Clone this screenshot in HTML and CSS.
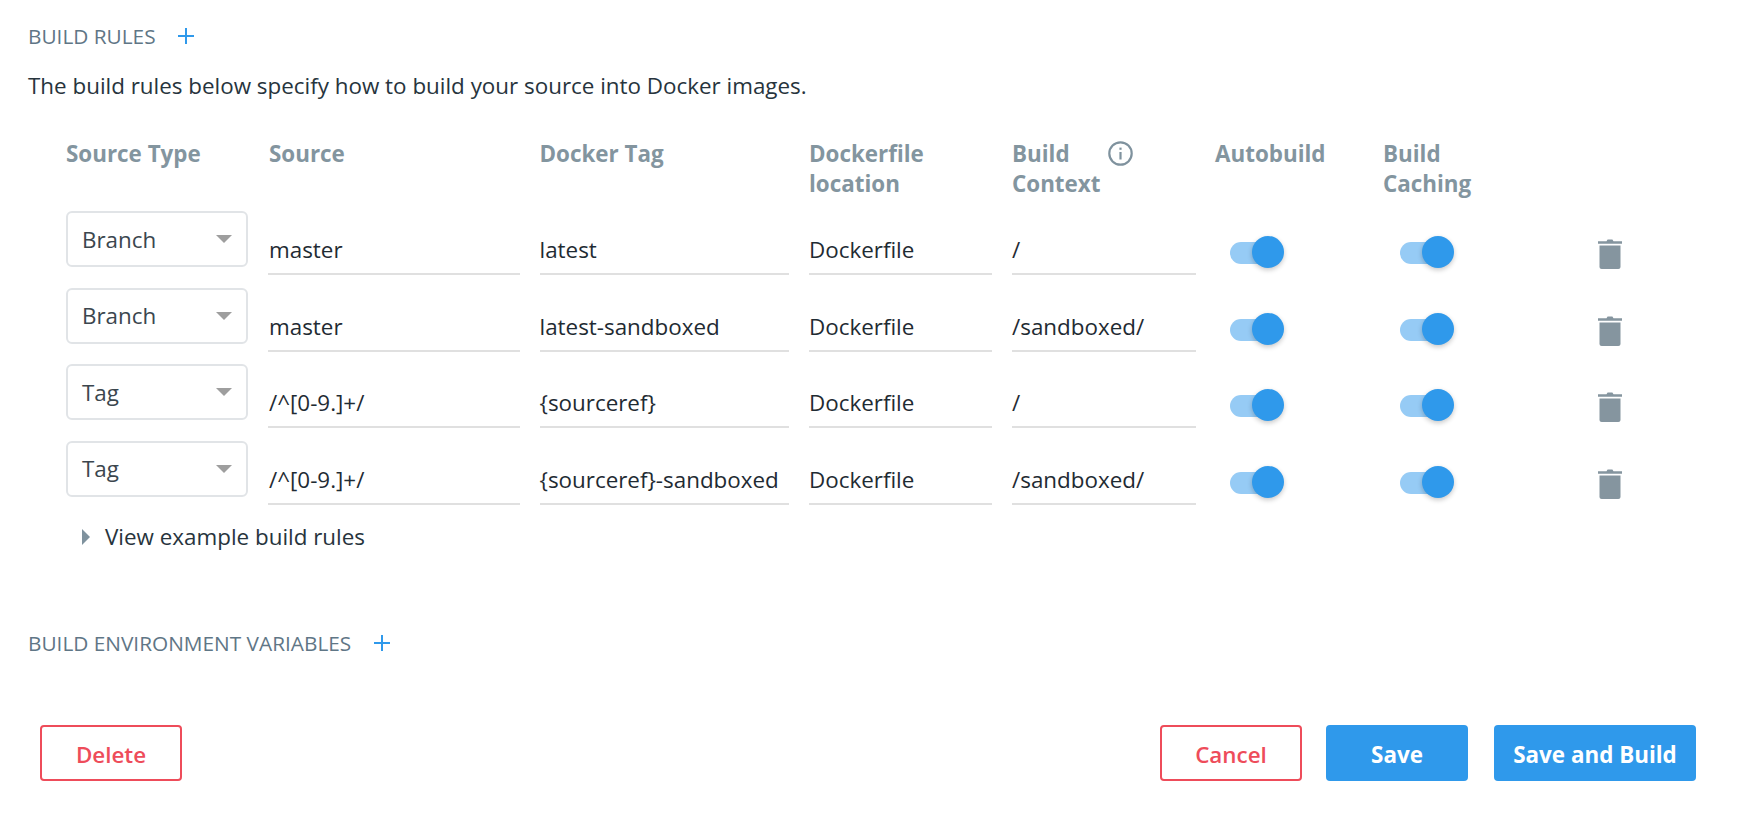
FILE: index.html
```html
<!DOCTYPE html>
<html lang="en">
<head>
<meta charset="utf-8">
<title>Build rules</title>
<link rel="stylesheet" href="styles.css">
</head>
<body>
<main class="page">
  <h2 class="section-title first"><span>BUILD RULES</span><svg class="plus" viewBox="0 0 16 16"><path d="M8 0v16M0 8h16"/></svg></h2>
  <p class="intro">The build rules below specify how to build your source into Docker images.</p>
  <section class="rules">
    <div class="head">Source Type</div>
    <div class="head">Source</div>
    <div class="head">Docker Tag</div>
    <div class="head">Dockerfile<br>location</div>
    <div class="head context">Build<br>Context<svg class="info" viewBox="0 0 25 25"><circle cx="12.5" cy="12.5" r="11.2"/><path d="M12.5 11v7.5"/><path class="dot" d="M12.5 6.6v2.2"/></svg></div>
    <div class="head">Autobuild</div>
    <div class="head">Build<br>Caching</div>
    <div class="head"></div>

    <div class="select"><span>Branch</span><i class="caret"></i></div>
    <div class="field source">master</div>
    <div class="field">latest</div>
    <div class="field">Dockerfile</div>
    <div class="field ctx">/</div>
    <div class="toggle"><i class="track"></i><i class="knob"></i></div>
    <div class="toggle alt"><i class="track"></i><i class="knob"></i></div>
    <div class="trash"><svg viewBox="0 0 24 30"><path d="M8.5 2.2 9.6.4h4.8l1.1 1.8H24v2.6H0V2.200z"/><path d="M1.500 6.600h21v21a2.200 2.200 0 0 1-2.200 2.400H3.700a2.200 2.200 0 0 1-2.200-2.400z"/></svg></div>

    <div class="select"><span>Branch</span><i class="caret"></i></div>
    <div class="field source">master</div>
    <div class="field">latest-sandboxed</div>
    <div class="field">Dockerfile</div>
    <div class="field ctx">/sandboxed/</div>
    <div class="toggle"><i class="track"></i><i class="knob"></i></div>
    <div class="toggle alt"><i class="track"></i><i class="knob"></i></div>
    <div class="trash"><svg viewBox="0 0 24 30"><path d="M8.5 2.2 9.6.4h4.8l1.1 1.8H24v2.6H0V2.200z"/><path d="M1.500 6.600h21v21a2.200 2.200 0 0 1-2.200 2.400H3.700a2.200 2.200 0 0 1-2.200-2.400z"/></svg></div>

    <div class="select"><span>Tag</span><i class="caret"></i></div>
    <div class="field source">/^[0-9.]+/</div>
    <div class="field">{sourceref}</div>
    <div class="field">Dockerfile</div>
    <div class="field ctx">/</div>
    <div class="toggle"><i class="track"></i><i class="knob"></i></div>
    <div class="toggle alt"><i class="track"></i><i class="knob"></i></div>
    <div class="trash"><svg viewBox="0 0 24 30"><path d="M8.5 2.2 9.6.4h4.8l1.1 1.8H24v2.6H0V2.200z"/><path d="M1.500 6.600h21v21a2.200 2.200 0 0 1-2.200 2.400H3.700a2.200 2.200 0 0 1-2.200-2.400z"/></svg></div>

    <div class="select"><span>Tag</span><i class="caret"></i></div>
    <div class="field source">/^[0-9.]+/</div>
    <div class="field">{sourceref}-sandboxed</div>
    <div class="field">Dockerfile</div>
    <div class="field ctx">/sandboxed/</div>
    <div class="toggle"><i class="track"></i><i class="knob"></i></div>
    <div class="toggle alt"><i class="track"></i><i class="knob"></i></div>
    <div class="trash"><svg viewBox="0 0 24 30"><path d="M8.5 2.2 9.6.4h4.8l1.1 1.8H24v2.6H0V2.200z"/><path d="M1.500 6.600h21v21a2.200 2.200 0 0 1-2.200 2.400H3.700a2.200 2.200 0 0 1-2.200-2.400z"/></svg></div>
  </section>
  <div class="example"><i class="arrow"></i><span>View example build rules</span></div>
  <h2 class="section-title env"><span>BUILD ENVIRONMENT VARIABLES</span><svg class="plus" viewBox="0 0 16 16"><path d="M8 0v16M0 8h16"/></svg></h2>
  <footer class="actions">
    <button class="btn danger">Delete</button>
    <div class="actions-right">
      <button class="btn danger cancel">Cancel</button>
      <button class="btn primary">Save</button>
      <button class="btn primary wide">Save and Build</button>
    </div>
  </footer>
</main>
</body>
</html>
```
FILE: styles.css
```css
* { box-sizing: border-box; }
html, body { margin: 0; background: #fff; }
body { font-family: "Open Sans", sans-serif; color: #27343d; }
.page { width: 1738px; height: 836px; padding: 21px 42px 0 28px; overflow: hidden; }

.section-title { display: flex; align-items: center; margin: 0; height: 30px; font-size: 20.8px; font-weight: 400; color: #5f7686; line-height: 30px; }
.section-title .plus { width: 16px; height: 16px; margin-left: 22px; }
.plus path { stroke: #2f99eb; stroke-width: 2; fill: none; }

.intro { margin: 19.5px 0 0; font-size: 22.4px; line-height: 30px; color: #27343d; }

.rules { display: grid; grid-template-columns: 182px 251.5px 249.5px 183px 183px 148px 149px 100px; grid-template-rows: 72.7px repeat(4, 76.6px); column-gap: 20px; margin: 38px 0 0 38px; }
.head { font-size: 22.4px; font-weight: 700; line-height: 30px; color: #83959f; white-space: nowrap; position: relative; }
.head:nth-child(2) { padding-left: 1px; }
.info { position: absolute; left: 96px; top: 2px; width: 25px; height: 25px; fill: none; stroke: #7f929e; stroke-width: 2.2; }

.select { display: flex; align-items: center; justify-content: space-between; height: 56px; padding: 0 14px 0 14px; border: 2px solid #e1e4e7; border-radius: 6px; font-size: 22.4px; color: #3b464e; }
.caret { width: 0; height: 0; border-left: 8px solid transparent; border-right: 8px solid transparent; border-top: 8px solid #9e9e9e; }

.field { height: 64px; padding: 24px 0 0 0; border-bottom: 2px solid #e0e0e0; font-size: 22.4px; line-height: 30px; color: #1f2b33; white-space: nowrap; }
.field.source { padding-left: 1px; }
.field.ctx { margin-right: -1px; }

.toggle { position: relative; height: 64px; }
.track { position: absolute; left: 15px; top: 31px; width: 48px; height: 22px; border-radius: 11px; background: #96cbf5; }
.knob { position: absolute; left: 37px; top: 25px; width: 32px; height: 32px; border-radius: 50%; background: #2f99eb; box-shadow: 0 2px 5px rgba(0,0,0,.22); }
.toggle.alt .track { left: 17px; }
.toggle.alt .knob { left: 39px; }

.trash { padding: 28px 0 0 46px; }
.trash svg { display: block; width: 24px; height: 30px; fill: #85959f; }

.example { display: flex; align-items: center; margin: 4.8px 0 0 54px; height: 30px; font-size: 22.4px; line-height: 30px; color: #27343d; }
.arrow { width: 0; height: 0; border-top: 8px solid transparent; border-bottom: 8px solid transparent; border-left: 8px solid #7f929e; margin-right: 15px; }

.section-title.env { margin-top: 76px; }
.section-title.env .plus { margin-left: 23px; }

.actions { display: flex; justify-content: space-between; margin: 66.5px 0 0 12px; }
.actions-right { display: flex; gap: 24px; }
.btn { height: 56px; width: 142px; border-radius: 4px; font-family: inherit; font-size: 22.4px; font-weight: 600; padding: 3px 0 0; }
.danger { background: #fff; border: 2px solid #ee4c5a; color: #ee4c5a; }
.primary { background: #2f99eb; border: 0; color: #fff; font-weight: 700; }
.wide { width: 202px; margin-left: 2px; }
```
